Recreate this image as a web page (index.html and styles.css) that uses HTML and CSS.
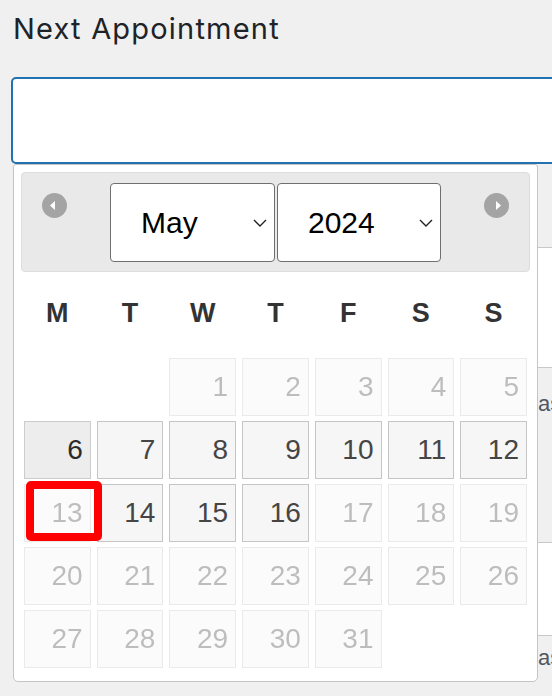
FILE: index.html
```html
<!DOCTYPE html>
<html lang="en">
<head>
<meta charset="utf-8">
<title>Next Appointment</title>
<link rel="stylesheet" href="styles.css">
</head>
<body>
<div class="page">
  <label class="title" for="appt">Next Appointment</label>
  <div class="field">
    <input id="appt" class="date-input" type="text">
    <div class="datepicker">
      <div class="dp-header">
        <a class="nav prev" title="Prev">
          <svg viewBox="0 0 25 25" width="25" height="25"><circle cx="12.5" cy="12.5" r="12.5" fill="#a4a4a4"/><path d="M8 12.5 L13 8 L13 17 Z" fill="#fff"/></svg>
        </a>
        <div class="selects">
          <div class="sel-wrap month">
            <select class="sel"><option>May</option></select>
            <svg class="chev" viewBox="0 0 14 8" width="14" height="8"><path d="M1 1 L7 7 L13 1" fill="none" stroke="#222" stroke-width="1.4"/></svg>
          </div>
          <div class="sel-wrap year">
            <select class="sel"><option>2024</option></select>
            <svg class="chev" viewBox="0 0 14 8" width="14" height="8"><path d="M1 1 L7 7 L13 1" fill="none" stroke="#222" stroke-width="1.4"/></svg>
          </div>
        </div>
        <a class="nav next" title="Next">
          <svg viewBox="0 0 25 25" width="25" height="25"><circle cx="12.5" cy="12.5" r="12.5" fill="#a4a4a4"/><path d="M17 12.5 L12 8 L12 17 Z" fill="#fff"/></svg>
        </a>
      </div>
      <table class="dp-cal">
        <thead>
          <tr><th>M</th><th>T</th><th>W</th><th>T</th><th>F</th><th>S</th><th>S</th></tr>
        </thead>
        <tbody>
          <tr>
            <td></td><td></td>
            <td><span class="day off">1</span></td>
            <td><span class="day off">2</span></td>
            <td><span class="day off">3</span></td>
            <td><span class="day off">4</span></td>
            <td><span class="day off">5</span></td>
          </tr>
          <tr>
            <td><a class="day hover">6</a></td>
            <td><a class="day">7</a></td>
            <td><a class="day">8</a></td>
            <td><a class="day">9</a></td>
            <td><a class="day">10</a></td>
            <td><a class="day">11</a></td>
            <td><a class="day">12</a></td>
          </tr>
          <tr>
            <td class="marked"><span class="day off">13</span><span class="annot"></span></td>
            <td><a class="day">14</a></td>
            <td><a class="day">15</a></td>
            <td><a class="day">16</a></td>
            <td><span class="day off">17</span></td>
            <td><span class="day off">18</span></td>
            <td><span class="day off">19</span></td>
          </tr>
          <tr>
            <td><span class="day off">20</span></td>
            <td><span class="day off">21</span></td>
            <td><span class="day off">22</span></td>
            <td><span class="day off">23</span></td>
            <td><span class="day off">24</span></td>
            <td><span class="day off">25</span></td>
            <td><span class="day off">26</span></td>
          </tr>
          <tr>
            <td><span class="day off">27</span></td>
            <td><span class="day off">28</span></td>
            <td><span class="day off">29</span></td>
            <td><span class="day off">30</span></td>
            <td><span class="day off">31</span></td>
            <td></td><td></td>
          </tr>
        </tbody>
      </table>
    </div>
  </div>
  <div class="list">
    <div class="row gray r1"></div>
    <div class="row white r2"></div>
    <div class="row gray r3"><span class="cell">as</span></div>
    <div class="row white r4"></div>
    <div class="row gray r5"><span class="cell">as</span></div>
  </div>
</div>
</body>
</html>
```

FILE: styles.css
```css
html, body {
  margin: 0;
  padding: 0;
}
body {
  background: #f0f0f1;
  width: 552px;
  height: 696px;
  overflow: hidden;
  font-family: "Liberation Sans", Arial, sans-serif;
}
.page {
  padding-left: 11px;
}
.title {
  display: block;
  margin-top: 9px;
  padding-left: 2px;
  height: 40px;
  line-height: 40px;
  font-family: Inter, "Noto Sans", sans-serif;
  font-size: 29px;
  letter-spacing: 1.2px;
  font-weight: 400;
  color: #1d2327;
}
.field {
  position: relative;
  margin-top: 28px;
  height: 87px;
}
.date-input {
  display: block;
  box-sizing: border-box;
  width: 620px;
  height: 87px;
  margin: 0;
  border: 2px solid #2271b1;
  border-radius: 5px;
  background: #fff;
  outline: none;
}
.datepicker {
  position: absolute;
  left: 2px;
  top: 87px;
  z-index: 5;
  box-sizing: border-box;
  width: 525px;
  padding: 7px 7px 11px 7px;
  background: #fff;
  border: 1px solid #c5c5c5;
  border-radius: 3px 3px 5px 5px;
}
.dp-header {
  box-sizing: border-box;
  height: 100px;
  display: grid;
  grid-template-columns: 1fr auto 1fr;
  background: #e9e9e9;
  border: 1px solid #dddddd;
  border-radius: 4px;
}
.nav {
  display: block;
  width: 25px;
  height: 25px;
  margin-top: 20px;
  filter: blur(0.6px);
}
.nav svg {
  display: block;
}
.prev {
  justify-self: start;
  margin-left: 20px;
}
.next {
  justify-self: end;
  margin-right: 20px;
}
.selects {
  align-self: center;
  display: flex;
  gap: 2px;
}
.sel-wrap {
  position: relative;
  height: 79px;
}
.sel-wrap.month { width: 165px; }
.sel-wrap.year { width: 164px; }
.sel {
  -webkit-appearance: none;
  appearance: none;
  box-sizing: border-box;
  width: 100%;
  height: 79px;
  margin: 0;
  padding: 0 0 0 30px;
  border: 1px solid #6f6f6f;
  border-radius: 4px;
  background: #fff;
  color: #000;
  font-family: "Liberation Sans", Arial, sans-serif;
  font-size: 30px;
}
.chev {
  position: absolute;
  right: 8px;
  top: 36px;
  pointer-events: none;
}
.dp-cal {
  width: 100%;
  table-layout: fixed;
  border-collapse: collapse;
  border-spacing: 0;
}
.dp-cal th {
  height: 82px;
  padding: 0 0 1px 0;
  text-align: center;
  font-size: 27px;
  font-weight: 700;
  color: #333;
}
.dp-cal td {
  padding: 2.5px 3px;
}
.day {
  display: block;
  box-sizing: border-box;
  height: 58px;
  line-height: 56px;
  padding-right: 7px;
  text-align: right;
  font-size: 28px;
  color: #454545;
  background: #f6f6f6;
  border: 1px solid #c5c5c5;
  text-decoration: none;
}
.day.hover {
  background: #ededed;
  border-color: #cccccc;
  color: #2b2b2b;
}
.day.off {
  opacity: 0.35;
}
.marked {
  position: relative;
}
.annot {
  position: absolute;
  left: 5px;
  top: 0;
  box-sizing: border-box;
  width: 76px;
  height: 60px;
  border: 8px solid #ff0000;
  border-radius: 5px;
  z-index: 2;
}
.list {
  margin-left: 300px;
}
.row {
  box-sizing: border-box;
  border-top: 1px solid #c8c8c8;
  padding-left: 227px;
  font-size: 22px;
  line-height: 28px;
  color: #50575e;
  white-space: nowrap;
}
.row.gray { background: #f0f0f1; }
.row.white { background: #fff; }
.r1 { height: 83px; border-top: none; }
.r2 { height: 120px; }
.r3 { height: 175px; padding-top: 22px; }
.r4 { height: 93px; }
.r5 { height: 80px; padding-top: 8px; }
```
